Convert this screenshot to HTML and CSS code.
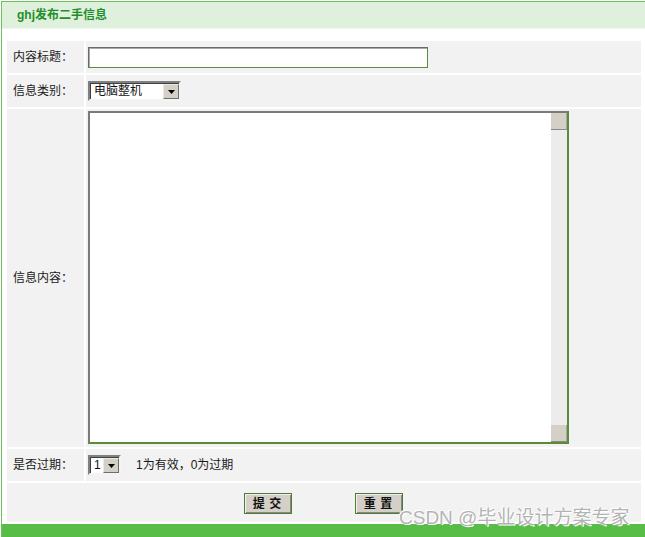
FILE: index.html
```html
<!DOCTYPE html>
<html lang="zh-CN">
<head>
<meta charset="utf-8">
<title>ghj发布二手信息</title>
<link rel="stylesheet" href="styles.css">
</head>
<body>
<div class="frame">
  <div class="title">ghj发布二手信息</div>
  <form class="form">
    <div class="label">内容标题：</div>
    <div class="field"><input class="text-input" type="text"></div>

    <div class="label">信息类别：</div>
    <div class="field">
      <span class="combo combo-wide">
        <span class="combo-value">电脑整机</span>
        <span class="combo-btn"><svg width="7" height="4" viewBox="0 0 7 4"><path d="M0 0H7L3.5 4Z" fill="#000"/></svg></span>
      </span>
    </div>

    <div class="label">信息内容：</div>
    <div class="field field-area">
      <div class="area">
        <textarea class="area-text"></textarea>
        <div class="scrollbar">
          <span class="sb-btn"></span>
          <span class="sb-track"></span>
          <span class="sb-btn"></span>
        </div>
      </div>
    </div>

    <div class="label">是否过期：</div>
    <div class="field">
      <span class="combo combo-small">
        <span class="combo-value">1</span>
        <span class="combo-btn"><svg width="7" height="4" viewBox="0 0 7 4"><path d="M0 0H7L3.5 4Z" fill="#000"/></svg></span>
      </span>
      <span class="hint">1为有效，0为过期</span>
    </div>

    <div class="actions">
      <button type="submit" class="btn">提&nbsp;交</button>
      <button type="reset" class="btn">重&nbsp;置</button>
    </div>
  </form>
  <div class="bottom-bar"></div>
  <div class="watermark">CSDN @毕业设计方案专家</div>
</div>
</body>
</html>
```

FILE: styles.css
```css
html, body {
  margin: 0;
  padding: 0;
  background: #fff;
}
body {
  font-family: "Liberation Sans", "Noto Sans CJK SC", sans-serif;
  font-size: 12px;
  color: #222;
}
.frame {
  position: relative;
  margin: 1px 0 0 1px;
  border-top: 1px solid #6cc35c;
  border-left: 1px solid #6cc35c;
  height: 535px;
  overflow: hidden;
}
.title {
  height: 26px;
  line-height: 26px;
  background: #dff0dc;
  border-bottom: 1px solid #eef7ec;
  padding-left: 15px;
  font-weight: bold;
  color: #1f8f2a;
  font-size: 12px;
}
.form {
  display: grid;
  grid-template-columns: 77px 1fr;
  gap: 2px;
  margin: 12px 4px 0 5px;
}
.label {
  background: #f2f2f2;
  padding-left: 6px;
  display: flex;
  align-items: center;
  line-height: 16px;
  color: #1a1a1a;
}
.field {
  background: #f2f2f2;
  padding-left: 2px;
  display: flex;
  align-items: center;
  height: 32px;
}
.field-area {
  height: 338px;
}
.text-input {
  box-sizing: border-box;
  width: 340px;
  height: 21px;
  margin: 0;
  padding: 0 3px;
  border: 1px solid;
  border-color: #6a6a6a #5b8c3a #5b8c3a #6a6a6a;
  box-shadow: inset 1px 1px 0 #a9a9a9;
  background: #fff;
  font: inherit;
  outline: none;
}
.combo {
  box-sizing: border-box;
  display: inline-flex;
  align-items: center;
  height: 20px;
  border: 2px solid;
  border-color: #808080 #f4f4f4 #f4f4f4 #808080;
  box-shadow: inset 1px 1px 0 #404040;
  background: #fff;
}
.combo-wide { width: 93px; }
.combo-small { width: 33px; }
.combo-value {
  flex: 1;
  padding-left: 4px;
  padding-top: 1px;
  line-height: 15px;
  color: #111;
  white-space: nowrap;
}
.combo-btn {
  box-sizing: border-box;
  width: 16px;
  height: 15px;
  margin: 1px 0 0 0;
  background: #d4d0c8;
  border: 1px solid;
  border-color: #ece9e2 #6e6e6e #6e6e6e #ece9e2;
  display: flex;
  align-items: center;
  justify-content: center;
}
.hint {
  margin-left: 15px;
  line-height: 16px;
  color: #1a1a1a;
}
.area {
  box-sizing: border-box;
  display: flex;
  width: 481px;
  height: 333px;
  margin-top: -2px;
  border: 2px solid;
  border-color: #7a7a7a #5b8a3a #5b8a3a #7a7a7a;
  background: #fff;
}
.area-text {
  flex: 1;
  border: 0;
  margin: 0;
  padding: 2px;
  resize: none;
  outline: none;
  font: inherit;
  background: #fff;
}
.scrollbar {
  width: 16px;
  display: flex;
  flex-direction: column;
  background: #ececec;
}
.sb-btn {
  height: 17px;
  background: #d4d0c8;
  box-sizing: border-box;
  border-bottom: 1px solid #8c8a85;
  border-right: 1px solid #a9a7a2;
}
.sb-track {
  flex: 1;
}
.actions {
  grid-column: 1 / span 2;
  background: #f2f2f2;
  height: 39px;
  display: flex;
  justify-content: center;
  align-items: center;
  gap: 63px;
  padding-right: 2px;
}
.btn {
  box-sizing: border-box;
  width: 48px;
  height: 21px;
  margin: 1px 0 0 0;
  padding: 0;
  background: #d4d0c8;
  border: 1px solid #4f7a33;
  box-shadow: inset 1px 1px 0 #f3f1ec, inset -1px -1px 0 #8a8780;
  font-family: "Noto Sans CJK SC", sans-serif;
  font-size: 12px;
  font-weight: bold;
  line-height: 16px;
  letter-spacing: 1px;
  color: #111;
}
.bottom-bar {
  margin-top: 2px;
  height: 14px;
  background: #57bd47;
}
.watermark {
  position: absolute;
  left: 397px;
  top: 504px;
  font-family: "Liberation Sans", "Noto Sans CJK SC", sans-serif;
  font-size: 19px;
  line-height: 24px;
  color: #b3b3b3;
  text-shadow: 0 0 1px #fff, 1px 1px 0 #fff, -1px -1px 0 #fff;
  white-space: nowrap;
}
```
